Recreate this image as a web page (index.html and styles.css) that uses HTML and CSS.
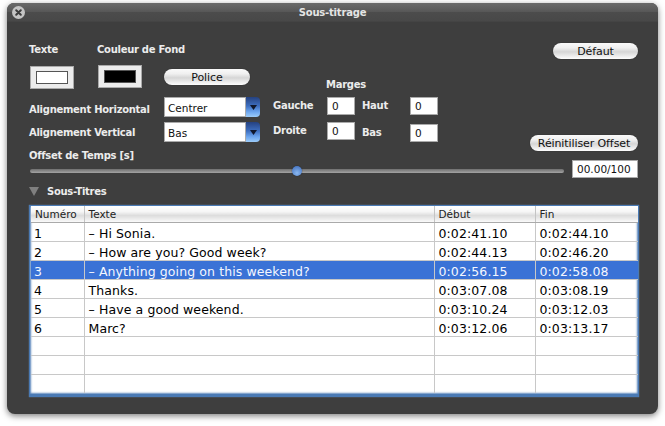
FILE: index.html
```html
<!DOCTYPE html>
<html lang="fr">
<head>
<meta charset="utf-8">
<title>Sous-titrage</title>
<link rel="stylesheet" href="styles.css">
</head>
<body>
<main class="window">
  <header class="titlebar">
    <span class="close"><svg viewBox="0 0 13 13" width="13" height="13"><path d="M4.2 4.2l4.6 4.6M8.8 4.2l-4.6 4.6" stroke="#3c3c3c" stroke-width="2" stroke-linecap="round"/></svg></span>
    <span class="title">Sous-titrage</span>
  </header>
  <div class="content">
    <section class="settings">
      <div class="left">
        <div class="colours">
          <div class="colour colour-text"><span class="label">Texte</span><span class="well"><i class="swatch white"></i></span></div>
          <div class="colour colour-bg"><span class="label">Couleur de Fond</span><span class="well"><i class="swatch black"></i></span></div>
          <button class="btn police">Police</button>
        </div>
        <div class="align align-h"><span class="label">Alignement Horizontal</span>
          <div class="select"><span class="value">Centrer</span><span class="arrow"><svg viewBox="0 0 7 5" width="7" height="5"><path d="M0 0h7L3.5 5z" fill="#10182c"/></svg></span></div></div>
        <div class="align align-v"><span class="label">Alignement Vertical</span>
          <div class="select"><span class="value">Bas</span><span class="arrow"><svg viewBox="0 0 7 5" width="7" height="5"><path d="M0 0h7L3.5 5z" fill="#10182c"/></svg></span></div></div>
      </div>
      <div class="margins">
        <div class="label margins-title">Marges</div>
        <div class="margin-grid">
          <div class="pair p1"><span class="label">Gauche</span><span class="field">0</span></div>
          <div class="pair p2"><span class="label">Haut</span><span class="field">0</span></div>
          <div class="pair p3"><span class="label">Droite</span><span class="field">0</span></div>
          <div class="pair p4"><span class="label">Bas</span><span class="field">0</span></div>
        </div>
      </div>
      <div class="right">
        <button class="btn defaut">Défaut</button>
        <button class="btn reset">Réinitiliser Offset</button>
      </div>
    </section>
    <div class="label offset-label">Offset de Temps [s]</div>
    <div class="offset-row">
      <div class="slider"><span class="thumb"></span></div>
      <span class="field offset-value">00.00/100</span>
    </div>
    <div class="disclosure"><svg viewBox="0 0 10 9" width="10" height="9"><path d="M0 0h10L5 9z" fill="#808080"/></svg><span class="label">Sous-Titres</span></div>
    <div class="table-wrap">
      <table>
        <colgroup><col class="c1"><col class="c2"><col class="c3"><col class="c4"></colgroup>
        <thead><tr><th>Numéro</th><th>Texte</th><th>Début</th><th>Fin</th></tr></thead>
        <tbody>
          <tr><td>1</td><td>– Hi Sonia.</td><td>0:02:41.10</td><td>0:02:44.10</td></tr>
          <tr><td>2</td><td>– How are you? Good week?</td><td>0:02:44.13</td><td>0:02:46.20</td></tr>
          <tr class="selected"><td>3</td><td>– Anything going on this weekend?</td><td>0:02:56.15</td><td>0:02:58.08</td></tr>
          <tr><td>4</td><td>Thanks.</td><td>0:03:07.08</td><td>0:03:08.19</td></tr>
          <tr><td>5</td><td>– Have a good weekend.</td><td>0:03:10.24</td><td>0:03:12.03</td></tr>
          <tr><td>6</td><td>Marc?</td><td>0:03:12.06</td><td>0:03:13.17</td></tr>
          <tr><td></td><td></td><td></td><td></td></tr>
          <tr><td></td><td></td><td></td><td></td></tr>
          <tr class="last"><td></td><td></td><td></td><td></td></tr>
        </tbody>
      </table>
    </div>
  </div>
</main>
</body>
</html>
```
FILE: styles.css
```css
* { box-sizing: border-box; }
html, body { margin: 0; height: 100%; }
body {
  width: 665px; height: 426px; overflow: hidden; background: #fff;
  padding: 3px 7px 0;
  font-family: "DejaVu Sans", Verdana, sans-serif;
}
.window {
  width: 651px; height: 411px;
  background: #3e3e3e;
  border-radius: 7px 7px 8px 8px;
  box-shadow: 0 2px 6px rgba(0,0,0,.5);
  color: #fff;
}
.titlebar {
  height: 19px; display: flex; align-items: center; justify-content: center;
  position: relative;
  border-radius: 7px 7px 0 0;
  background: linear-gradient(#6a6a6a, #575757 50%, #4c4c4c 50%, #484848);
  border-bottom: 1px solid #444;
}
.title { font-size: 10px; font-weight: 700; color: #e4e4e4; letter-spacing: -.2px; padding-top: 1px; }
.close {
  position: absolute; left: 5px; top: 3px; width: 13px; height: 13px; border-radius: 50%;
  background: #c4c4c4; display: block;
}
.close svg { display: block; }
.content { padding: 0 20px 0 22px; }
.label { font-size: 10px; font-weight: 700; color: #ececec; white-space: nowrap; letter-spacing: -.28px; }
.settings { display: flex; height: 135px; }
.left { width: 244px; padding-top: 21px; }
.colours { display: flex; height: 53px; }
.colour { display: flex; flex-direction: column; }
.colour-text { width: 68px; gap: 10px; }
.colour-bg { width: 67px; gap: 9px; white-space: nowrap; }
.colour-bg .label, .colour-text .label { line-height: 13px; }
.well {
  width: 44px; height: 23px; background: #ececec; border: 1px solid #aaa;
  padding: 4px 5px; display: block; margin-left: 1px;
}
.swatch { display: block; height: 100%; border: 1px solid #555; }
.white { background: #fff; }
.black { background: #000; }
.btn {
  font: 11px "DejaVu Sans", Verdana, sans-serif; color: #111;
  height: 16px; padding: 0; border: 0; border-radius: 8px;
  background: linear-gradient(#fafafa, #f0f0f0 30%, #d6d6d6 55%, #fdfdfd);
  box-shadow: 0 0 1px #222;
  letter-spacing: -.1px;
}
.police { width: 86px; margin: 26px 0 0 0; }
.align { display: grid; grid-template-columns: 135px 96px; align-items: center; }
.align-h { height: 20px; margin-top: 1px; }
.align-v { height: 18px; margin-top: 5px; }
.align-h .label { padding-top: 4px; }
.select { display: flex; height: 100%; }
.value {
  flex: 1; background: #fff; color: #111; font-size: 10.5px; border: 1px solid #aaa; padding: 2px 3px 0; line-height: 16px;
}
.arrow {
  width: 14px; display: flex; align-items: center; justify-content: center;
  background: linear-gradient(#25417f, #3e6fc0 45%, #6ea7ef 75%, #9ccbf8);
  border-radius: 0 4px 4px 0;
}
.margins { width: 165px; padding-top: 56px; }
.margins-title { margin-left: 53px; line-height: 13px; }
.margin-grid { display: grid; grid-template-columns: 82px 76px; column-gap: 7px; grid-template-rows: 25px 20px; margin-top: 6px; }
.pair { display: flex; align-items: flex-start; justify-content: space-between; }
.pair .label { line-height: 18px; }
.p4 { margin-top: 2px; }
.field {
  display: block; width: 28px; height: 18px; background: #fff; color: #111; font-size: 10.5px;
  border: 1px solid #aaa; padding: 0 0 0 4px; line-height: 16px;
}
.right { flex: 1; display: flex; flex-direction: column; align-items: flex-end; padding-top: 21px; }
.defaut { width: 85px; }
.reset { width: 108px; margin-top: 76px; white-space: nowrap; }
.offset-label { line-height: 13px; margin-top: -8px; }
.offset-row { display: flex; align-items: center; height: 18px; margin-top: -2px; }
.slider {
  position: relative; width: 534px; height: 4px; margin: 4px 8px 0 1px; border-radius: 2px;
  background: linear-gradient(#6e6e6e, #a4a4a4);
}
.thumb {
  position: absolute; left: 262px; top: -3px; width: 10px; height: 10px; border-radius: 50%;
  background: radial-gradient(circle at 50% 70%, #8ab8f0, #3a68b8);
  box-shadow: 0 0 1px #111;
}
.offset-value { width: 66px; padding-left: 4px; flex: none; }
.disclosure { display: flex; align-items: center; height: 13px; margin-top: 7px; gap: 8px; }
.table-wrap {
  width: 610px; height: 192px; margin-top: 7px;
  padding: 0 1px; border: 1px solid #4a7ab4; border-width: 1px 1px 3px 1px;
  background: #fff;
  box-shadow: 0 0 2px 1px #5a86bc inset, 0 0 1px #6e96c4;
}
table { border-collapse: collapse; table-layout: fixed; width: 607px; color: #000; font-size: 12.5px; }
.c1 { width: 53px; } .c2 { width: 350px; } .c3 { width: 101px; } .c4 { width: 103px; }
th {
  height: 16px; font-weight: 400; font-size: 10.5px; text-align: left; padding: 0 0 0 4px;
  color: #222; border-right: 1px solid #c4c4c4; border-bottom: 1px solid #aaa;
  background: linear-gradient(#fff, #f6f6f6 35%, #dcdcdc 60%, #fafafa);
}
td {
  height: 19px; padding: 3px 0 0 4px; border-right: 1px solid #c8c8c8; border-bottom: 1px solid #c8c8c8;
  white-space: nowrap; letter-spacing: .1px; line-height: 15px;
}
td:first-child { padding-left: 3px; }
th:last-child, td:last-child { border-right: 0; }
.selected td { background: #3a72d6; color: #f4f7ff; }
.last td { border-bottom: 0; }
```
